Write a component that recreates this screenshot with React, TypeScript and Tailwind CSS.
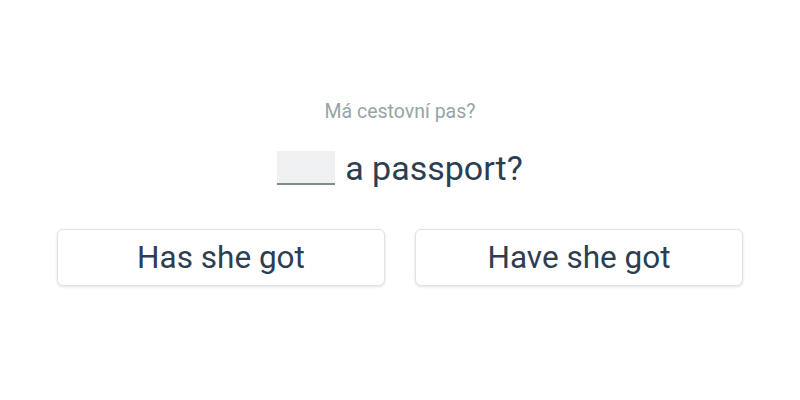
export default function App() {
  return (
    <div className="w-[800px] h-[400px] bg-white flex flex-col items-center font-['Roboto',sans-serif]">
      <p className="mt-[99px] text-[19.5px] leading-[26px] text-[#95a5a6]">Má cestovní pas?</p>
      <div className="mt-[23px] flex items-center gap-[10px] text-[34px] leading-[40px] text-[#2c3e50]">
        <span className="w-[58px] h-[34px] bg-[#eef0f2] border-b-2 border-[#7f8c8d]" />
        <span>a passport?</span>
      </div>
      <div className="mt-[41px] w-full px-[57px] grid grid-cols-2 gap-[30px]">
        {['Has she got', 'Have she got'].map((label) => (
          <button
            key={label}
            className="h-[57px] rounded-[6px] border border-[#dfe3e6] bg-white shadow-[0_1px_3px_rgba(0,0,0,0.12)] text-[31.5px] text-[#2c3e50]"
          >
            {label}
          </button>
        ))}
      </div>
    </div>
  )
}
